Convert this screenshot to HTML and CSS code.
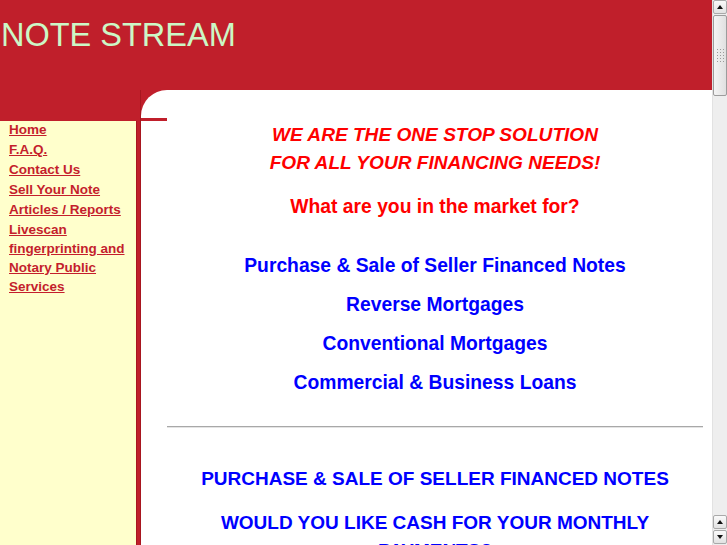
FILE: index.html
```html
<!DOCTYPE html>
<html>
<head>
<meta charset="utf-8">
<title>NOTE STREAM</title>
<link rel="stylesheet" href="styles.css">
</head>
<body>
<div class="page">
  <header class="masthead">
    <h1 class="site-title">NOTE STREAM</h1>
  </header>
  <div class="body-row">
    <div class="side-col">
      <nav class="sidebar">
        <a href="#" class="nav-link">Home</a>
        <a href="#" class="nav-link">F.A.Q.</a>
        <a href="#" class="nav-link">Contact Us</a>
        <a href="#" class="nav-link">Sell Your Note</a>
        <a href="#" class="nav-link">Articles / Reports</a>
        <a href="#" class="nav-link">Livescan fingerprinting and Notary Public Services</a>
      </nav>
    </div>
    <main class="main">
      <div class="content">
        <p class="slogan">WE ARE THE ONE STOP SOLUTION<br>FOR ALL YOUR FINANCING NEEDS!</p>
        <p class="question">What are you in the market for?</p>
        <ul class="services">
          <li>Purchase &amp; Sale of Seller Financed Notes</li>
          <li>Reverse Mortgages</li>
          <li>Conventional Mortgages</li>
          <li>Commercial &amp; Business Loans</li>
        </ul>
        <hr class="rule">
        <h2 class="section-title">PURCHASE &amp; SALE OF SELLER FINANCED NOTES</h2>
        <h2 class="section-sub">WOULD YOU LIKE CASH FOR YOUR MONTHLY PAYMENTS?</h2>
      </div>
    </main>
  </div>
</div>
<div class="scrollbar">
  <div class="sb-btn sb-up"></div>
  <div class="sb-thumb"><div class="sb-grip"></div></div>
  <div class="sb-track"></div>
  <div class="sb-btn sb-up"></div>
  <div class="sb-btn sb-down"></div>
</div>
</body>
</html>
```
FILE: styles.css
```css
html, body {
  margin: 0;
  padding: 0;
  height: 100%;
  overflow: hidden;
}
body {
  font-family: "Liberation Sans", Arial, sans-serif;
  background: #ffffff;
}
.page {
  width: 712px;
}
.masthead {
  background: #c01f2b;
  height: 90px;
  padding: 19px 0 0 1px;
  box-sizing: border-box;
}
.site-title {
  margin: 0;
  font-size: 32.5px;
  line-height: 32px;
  font-weight: normal;
  color: #ccf7c6;
}
.body-row {
  display: flex;
  background: #c01f2b;
  min-height: 455px;
}
.side-col {
  width: 141px;
  flex: 0 0 141px;
  display: flex;
  flex-direction: column;
  padding-top: 31px;
  box-shadow: inset -1px 0 0 #a8161f;
}
.sidebar {
  flex: 1;
  width: 136px;
  background: #ffffcc;
  box-sizing: border-box;
  padding-left: 9px;
  display: flex;
  flex-direction: column;
  gap: 1px;
  box-shadow: 1px 0 0 #a8161f;
}
.nav-link {
  font-size: 13.5px;
  line-height: 19px;
  font-weight: bold;
  color: #c41e2c;
  text-decoration: underline;
}
.nav-link:first-child {
  margin-top: -1px;
}
.main {
  flex: 1;
  background: #ffffff;
  border-top-left-radius: 26px;
  position: relative;
}
.main::before {
  content: "";
  position: absolute;
  left: 0;
  top: 28px;
  width: 26px;
  height: 3px;
  background: #c01f2b;
}
.content {
  padding: 31px 9px 0 26px;
  text-align: center;
  font-size: 19.3px;
  line-height: 28px;
  font-weight: bold;
}
.slogan {
  margin: 0;
  color: #ff0000;
  font-style: italic;
  font-size: 19.1px;
}
.question {
  margin: 16px 0 0;
  color: #ff0000;
}
.services {
  list-style: none;
  margin: 31px 0 0;
  padding: 0;
  color: #0000ff;
  display: flex;
  flex-direction: column;
  gap: 11px;
}
.rule {
  margin: 29px 0 0;
  height: 0;
  border: 0;
  border-top: 1px solid #a8a8a8;
  border-bottom: 1px solid #e4e4e4;
}
.section-title {
  margin: 37px 0 0;
  font-size: 19px;
  line-height: 28px;
  color: #0000ff;
}
.section-sub {
  margin: 16px 0 0;
  font-size: 19px;
  line-height: 28px;
  color: #0000ff;
}
.scrollbar {
  position: fixed;
  top: 0;
  right: 0;
  width: 15px;
  height: 545px;
  background: #eeeeee;
  display: flex;
  flex-direction: column;
  box-sizing: border-box;
  border-left: 1px solid #e2e2e2;
}
.sb-btn {
  height: 14px;
  flex: 0 0 14px;
  box-sizing: border-box;
  border: 1px solid #a9a9a9;
  border-radius: 2px;
  background: linear-gradient(#fafafa, #e2e2e2);
  position: relative;
  margin: 0 0 1px 0;
}
.sb-btn::after {
  content: "";
  position: absolute;
  left: 3px;
  width: 0;
  height: 0;
  border-left: 3.5px solid transparent;
  border-right: 3.5px solid transparent;
}
.sb-up::after {
  top: 4px;
  border-bottom: 4px solid #111111;
}
.sb-down::after {
  top: 4px;
  border-top: 4px solid #111111;
}
.sb-thumb {
  height: 81px;
  flex: 0 0 81px;
  box-sizing: border-box;
  border: 1px solid #9c9c9c;
  border-radius: 2px;
  background: linear-gradient(90deg, #f4f4f4, #e0e0e0);
  display: flex;
  align-items: center;
  justify-content: center;
}
.sb-grip {
  width: 8px;
  height: 15px;
  background-image: radial-gradient(circle, #9a9a9a 0.8px, transparent 1px);
  background-size: 3px 3px;
}
.sb-track {
  flex: 1;
}
```
